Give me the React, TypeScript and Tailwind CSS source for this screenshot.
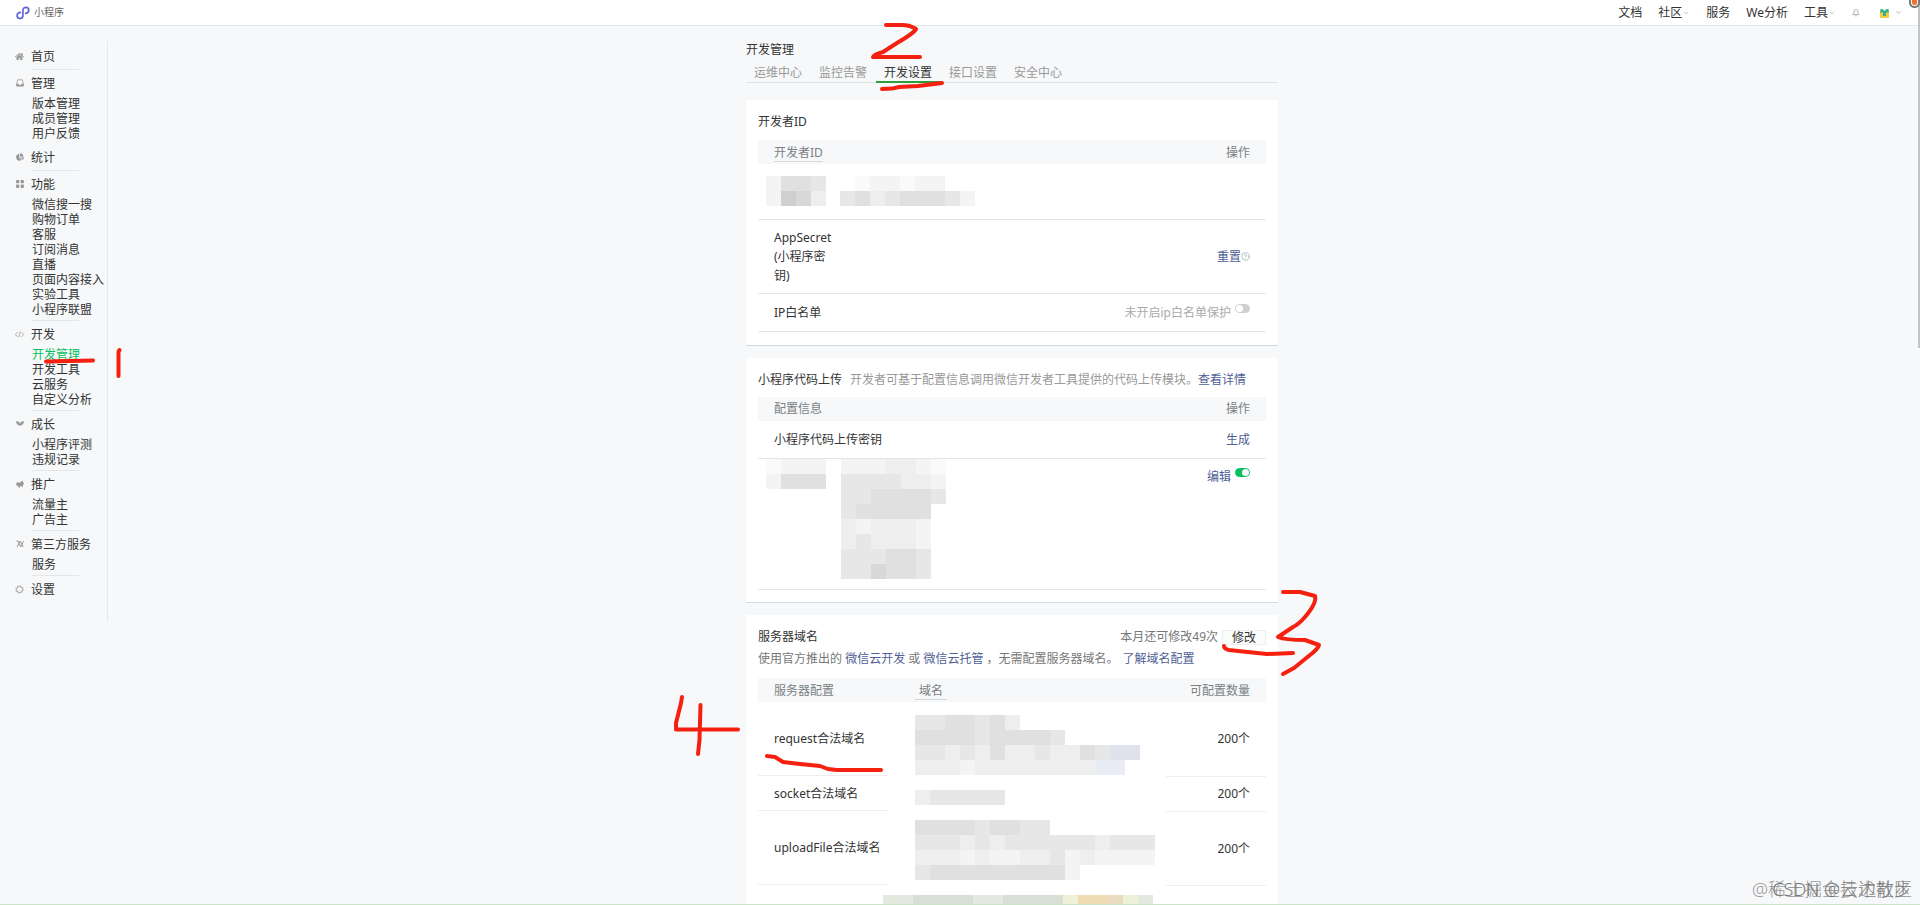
import type { ReactNode } from 'react'
import { FaHome, FaChartPie } from 'react-icons/fa'
import { ChevronDown, Bell, CircleHelp } from 'lucide-react'

interface NavSection {
  label: string
  icon: ReactNode
  items?: string[]
  divider?: boolean
}

const ManageIcon = () => (
  <svg width="8" height="8" viewBox="0 0 8 8" fill="none" stroke="currentColor">
    <path d="M0.6 5 L1.6 0.8 H6.4 L7.4 5 V7 H0.6 Z" strokeWidth="0.8" />
    <path d="M0.6 4.8 H2.4 Q2.8 6 4 6 Q5.2 6 5.6 4.8 H7.4 V7.2 H0.6 Z" fill="currentColor" stroke="none" />
  </svg>
)

const GridIcon = () => (
  <svg width="8" height="8" viewBox="0 0 8 8" fill="currentColor">
    <rect x="0" y="0" width="3.3" height="3.3" rx="0.8" />
    <rect x="4.6" y="0" width="3.3" height="3.3" rx="0.8" />
    <rect x="0" y="4.6" width="3.3" height="3.3" rx="0.8" />
    <rect x="4.6" y="4.6" width="3.3" height="3.3" rx="0.8" />
  </svg>
)

const CodeIcon = () => (
  <svg width="9" height="7" viewBox="0 0 9 7" fill="none" stroke="currentColor" strokeWidth="0.8">
    <path d="M2.4 1.2 L0.5 3.5 L2.4 5.8 M6.6 1.2 L8.5 3.5 L6.6 5.8 M5.2 0.6 L3.8 6.4" />
  </svg>
)

const GrowIcon = () => (
  <svg width="8" height="8" viewBox="0 0 8 8" fill="currentColor">
    <path d="M0 1.2 Q3.6 0.8 4 4 Q4.4 0.8 8 1.2 Q7.6 5 4 5.8 Q0.4 5 0 1.2 Z" />
  </svg>
)

const PromoteIcon = () => (
  <svg width="8" height="8" viewBox="0 0 8 8" fill="currentColor">
    <path d="M7 0.4 V7 L4.8 5.9 H4.2 V7.6 H2.2 V5.8 H0.3 V2.4 H3.8 Z" />
    <path d="M7.3 2.6 H8 V4.8 H7.3 Z" />
  </svg>
)

const ThirdPartyIcon = () => (
  <svg width="8" height="8" viewBox="0 0 8 8" fill="none" stroke="currentColor" strokeWidth="1">
    <path d="M0.5 1 H2 L4.6 7 M4.2 1 L1 7 M4.2 1 L7.2 7 M7.6 1 L4.6 7" />
  </svg>
)

const SettingIcon = () => (
  <svg width="9" height="9" viewBox="0 0 9 9" fill="none" stroke="currentColor">
    <circle cx="4.5" cy="4.5" r="3" strokeWidth="0.9" />
    <circle cx="4.5" cy="4.5" r="3.8" strokeWidth="0.9" strokeDasharray="1.2 1.78" />
  </svg>
)

const sections: NavSection[] = [
  { label: '首页', icon: <FaHome size={9} />, divider: true },
  { label: '管理', icon: <ManageIcon />, items: ['版本管理', '成员管理', '用户反馈'] },
  { label: '统计', icon: <FaChartPie size={8} />, divider: true },
  {
    label: '功能',
    icon: <GridIcon />,
    items: ['微信搜一搜', '购物订单', '客服', '订阅消息', '直播', '页面内容接入', '实验工具', '小程序联盟'],
    divider: true,
  },
  { label: '开发', icon: <CodeIcon />, items: ['开发管理', '开发工具', '云服务', '自定义分析'], divider: true },
  { label: '成长', icon: <GrowIcon />, items: ['小程序评测', '违规记录'], divider: true },
  { label: '推广', icon: <PromoteIcon />, items: ['流量主', '广告主'], divider: true },
  { label: '第三方服务', icon: <ThirdPartyIcon />, items: ['服务'], divider: true },
  { label: '设置', icon: <SettingIcon /> },
]

const tabs = ['运维中心', '监控告警', '开发设置', '接口设置', '安全中心']

// Each character is one tile, '.' leaves it empty
const shades: Record<string, string> = {
  '.': 'transparent',
  a: '#fafafa',
  b: '#f4f4f4',
  c: '#eeeeee',
  d: '#e7e7e7',
  e: '#e0e0e0',
  f: '#d8d8d8',
  g: '#cfcfcf',
  h: '#dfe2ea',
  i: '#eaecf5',
  l: '#e3e9de',
  m: '#d8dfd5',
  n: '#eef0d8',
  o: '#eedcb4',
  p: '#e9dcc0',
}

const Mosaic = ({ rows }: { rows: string[] }) => (
  <div aria-hidden="true">
    {rows.map((row, r) => (
      <div key={r} className="flex">
        {row.split('').map((tile, i) => (
          <span key={i} className="size-[15px] shrink-0" style={{ background: shades[tile] }} />
        ))}
      </div>
    ))}
  </div>
)

const Switch = ({ label, on = false }: { label: string; on?: boolean }) => (
  <label className="mb-2 inline-flex">
    <input type="checkbox" role="switch" aria-label={label} defaultChecked={on} className="peer sr-only" />
    <span className="flex h-[9px] w-[15px] rounded-full border border-[#cfcfcf] bg-[#cfcfcf] peer-checked:justify-end peer-checked:border-[#07c160] peer-checked:bg-[#07c160]">
      <span className="size-[7px] rounded-full bg-white" />
    </span>
  </label>
)

const Card = ({ children }: { children: ReactNode }) => (
  <section className="border-b border-[#d5dadc] bg-white px-3">{children}</section>
)

const Header = () => (
  <header className="flex h-[26px] shrink-0 items-center justify-between border-b border-[#e4e7e9] bg-white pr-[18px] pl-4">
    <a href="#" className="flex items-center gap-1 text-[10px] text-[#666]">
      <svg width="14" height="14" viewBox="0 0 14 14" fill="none" stroke="#6467d9" strokeWidth="1.7" strokeLinecap="round">
        <path d="M4.4 6.4 C2.2 6.8 1.1 8 1.1 9.6 C1.1 11.3 2.4 12.6 4 12.6 C5.7 12.6 6.9 11.3 6.9 9.6 V4.4 C6.9 2.6 8.2 1.4 9.9 1.4 C11.6 1.4 12.8 2.6 12.8 4.2 C12.8 5.8 11.6 7 9.6 7.4" />
      </svg>
      小程序
    </a>
    <nav className="flex items-center">
      <a href="#" className="mr-4">文档</a>
      <a href="#" className="mr-4 flex items-center">社区<ChevronDown size={8} color="#aaa" /></a>
      <a href="#" className="mr-4">服务</a>
      <a href="#" className="mr-4">We分析</a>
      <a href="#" className="mr-4 flex items-center">工具<ChevronDown size={8} color="#aaa" /></a>
      <button aria-label="通知" className="mr-5"><Bell size={8} color="#888" /></button>
      <button aria-label="账号" className="flex items-center gap-1.5">
        <svg width="9" height="10" viewBox="0 0 9 10">
          <path d="M0 3 H9 V10 H0 Z" fill="#f6c944" />
          <path d="M0.5 1 L3 1.2 L4.5 3 L6 1.2 L8.5 1 L9 4.4 H6 V8 H3 V4.4 H0 Z" fill="#35b48c" />
        </svg>
        <ChevronDown size={7} color="#888" />
      </button>
    </nav>
  </header>
)

const Sidebar = () => (
  <nav className="relative mt-[15px] w-[108px] shrink-0 self-start border-r border-[#e6e8ea] pt-0.5 pb-5">
    {sections.map(section => (
      <div key={section.label} className="flex">
        <span className="flex h-[26px] w-[31px] shrink-0 items-center justify-center pl-2 text-[#999]">{section.icon}</span>
        <div className="whitespace-nowrap">
          <a href="#" className="flex h-[26px] items-center">{section.label}</a>
          {section.items && (
            <ul className="pb-[3px] pl-px leading-[15px]">
              {section.items.map(item => (
                <li key={item}>
                  <a href="#" className={item === '开发管理' ? 'text-[#07c160]' : ''}>{item}</a>
                </li>
              ))}
            </ul>
          )}
          {section.divider && <hr className="w-12 border-[#e4e6e8]" />}
        </div>
      </div>
    ))}
    <svg className="pointer-events-none absolute top-0 left-0 overflow-visible" width="108" height="580" fill="none" stroke="#f5200f" strokeWidth="4" strokeLinecap="round" strokeLinejoin="round">
      <path d="M46 320.5 L93 319.5" />
      <path d="M119.5 309 L118.5 311 V335" />
    </svg>
  </nav>
)

const DeveloperId = () => (
  <Card>
    <h3 className="pt-3 pb-[9px]">开发者ID</h3>
    <table className="w-full table-fixed">
      <thead className="bg-[#f6f8f9] text-[#7b7f83]">
        <tr className="h-6">
          <th className="w-[100px] pl-4 text-left font-normal">
            <span className="border-b border-[#d5d9dc]">开发者ID</span>
          </th>
          <th className="pr-4 text-right font-normal">操作</th>
        </tr>
      </thead>
      <tbody>
        <tr className="h-[55px] border-b border-[#e2e4e6]">
          <td className="pl-2">
            <Mosaic rows={['beed', 'bgfc']} />
          </td>
          <td>
            <div className="-ml-[18px]"><Mosaic rows={['.abbabb', 'decdeeedb']} /></div>
          </td>
        </tr>
        <tr className="h-[74px] border-b border-[#e2e4e6]">
          <td className="pl-4">AppSecret<br />(小程序密<br />钥)</td>
          <td className="pr-4">
            <div className="flex items-center justify-end">
              <a href="#" className="text-[#4f6095]">重置</a>
              <CircleHelp size={9} color="#aaa" />
            </div>
          </td>
        </tr>
        <tr className="h-[38px] border-b border-[#e2e4e6]">
          <td className="pl-4">IP白名单</td>
          <td className="pr-4">
            <div className="flex items-center justify-end gap-1 text-[#aaa]">
              未开启ip白名单保护
              <Switch label="IP白名单保护" />
            </div>
          </td>
        </tr>
      </tbody>
    </table>
    <div className="h-[13px]" />
  </Card>
)

const CodeUpload = () => (
  <Card>
    <div className="flex pt-3 pb-2 whitespace-nowrap">
      <h3 className="mr-2">小程序代码上传</h3>
      <p className="text-[#999]">
        开发者可基于配置信息调用微信开发者工具提供的代码上传模块。<a href="#" className="text-[#4f6095]">查看详情</a>
      </p>
    </div>
    <table className="w-full">
      <thead className="bg-[#f6f8f9] text-[#7b7f83]">
        <tr className="h-6">
          <th className="pl-4 text-left font-normal">配置信息</th>
          <th className="pr-4 text-right font-normal">操作</th>
        </tr>
      </thead>
      <tbody>
        <tr className="h-[38px] border-b border-[#e2e4e6]">
          <td className="pl-4">小程序代码上传密钥</td>
          <td className="pr-4 text-right"><a href="#" className="text-[#4f6095]">生成</a></td>
        </tr>
        <tr className="h-[131px] border-b border-[#e2e4e6] align-top">
          <td className="pl-2">
            <div className="flex gap-[15px]">
              <Mosaic rows={['abbb', 'beee']} />
              <Mosaic rows={['bbbccba', 'ddddccb', 'ddeeeed', 'deeeee', 'cbcccb', 'cdcccb', 'dddeed', 'ddfeed']} />
            </div>
          </td>
          <td className="pt-2 pr-4">
            <div className="flex items-center justify-end gap-1">
              <a href="#" className="text-[#4f6095]">编辑</a>
              <Switch label="小程序代码上传" on />
            </div>
          </td>
        </tr>
      </tbody>
    </table>
    <div className="h-3" />
  </Card>
)

const domains = [
  {
    name: 'request合法域名',
    height: 'h-[74px]',
    offset: 'pt-3',
    tiles: ['ddeedec', 'eeeedeeeed', 'ddcdceccdccedhh', 'cccbccccccccii'],
  },
  { name: 'socket合法域名', height: 'h-[35px]', offset: 'pt-2', tiles: ['cddddd'] },
  {
    name: 'uploadFile合法域名',
    height: 'h-[74px]',
    offset: 'pt-1',
    tiles: ['eeeedeedd', 'dddcdcddddddcddd', 'cccbcbbccdbcbbbb', 'deeeeeeeeeb'],
  },
]

const ServerDomains = () => (
  <Card>
    <div className="flex items-center justify-between pt-3 leading-5">
      <h3>服务器域名</h3>
      <div className="flex items-center gap-1 text-[#777]">
        本月还可修改49次
        <button className="h-[15px] w-11 border border-[#eceeef] bg-[#fafbfb] text-xs leading-[13px] text-[#333]">修改</button>
      </div>
    </div>
    <p className="pt-0.5 pb-[10px] whitespace-nowrap text-[#777]">
      使用官方推出的 <a href="#" className="text-[#4f6095]">微信云开发</a> 或 <a href="#" className="text-[#4f6095]">微信云托管</a> ，无需配置服务器域名。
      <a href="#" className="ml-1 text-[#4f6095]">了解域名配置</a>
    </p>
    <table className="w-full table-fixed">
      <thead className="bg-[#f6f8f9] text-[#7b7f83]">
        <tr className="h-6">
          <th className="w-[157px] pl-4 text-left font-normal">服务器配置</th>
          <th className="text-left font-normal"><span className="border-b border-[#d5d9dc] px-1">域名</span></th>
          <th className="w-[100px] pr-4 text-right font-normal">可配置数量</th>
        </tr>
      </thead>
      <tbody>
        {domains.map(domain => (
          <tr key={domain.name} className={domain.height}>
            <td>
              <div className={`mr-[27px] flex items-center border-b border-[#eceeef] pl-4 whitespace-nowrap ${domain.height}`}>{domain.name}</div>
            </td>
            <td className={domain.offset}><Mosaic rows={domain.tiles} /></td>
            <td className="border-b border-[#eceeef] pr-4 text-right">200个</td>
          </tr>
        ))}
        <tr>
          <td />
          <td className="pt-[10px]"><div className="-ml-8"><Mosaic rows={['llmmmmllmmmmnoopnl']} /></div></td>
          <td />
        </tr>
      </tbody>
    </table>
  </Card>
)

// Hand-drawn marks, in the coordinates of the settings column
const Marks = () => (
  <svg className="pointer-events-none absolute top-0 left-0 overflow-visible" width="532" height="800" fill="none" stroke="#f5200f" strokeWidth="4" strokeLinecap="round" strokeLinejoin="round">
    <g transform="translate(-746 -26)">
      <path d="M886 25 H902 Q910 25 916 29 Q914 33 897 43 L883 52 Q875 54 873 57 H920" />
      <path d="M882 89 L892 88.6 L899 87 L918 86 L942 83" />
      <path d="M1283 592 H1300 L1315 596 Q1317 603 1305 617 Q1299 624 1293 627 L1278 637 Q1285 640 1305 640 L1319 645 Q1318 649 1310 655 L1294 668 L1283 674" />
      <path d="M1224 646 Q1224 649 1229 650 L1238 651 L1267 654 L1293 653" />
      <path d="M682 697 L681 703 L676 723 V729.5 H738" />
      <path d="M700.5 705 L699.5 740 L698 754" />
      <path d="M767 756 L775 757 L783 762 L800 764 L820 766 L828 769 L837 770 H881" />
    </g>
  </svg>
)

const App = () => (
  <div className="relative flex h-screen flex-col overflow-hidden bg-[#f6f8f9] font-['Noto_Sans','Noto_Sans_CJK_SC',sans-serif] text-xs leading-[19px] text-[#333]">
    <Header />
    <div className="flex">
      <Sidebar />
      <main className="flex flex-1 justify-center pr-1">
        <div className="relative w-[532px]">
          <h2 className="pt-[14px]">开发管理</h2>
          <div role="tablist" className="mb-[17px] flex h-6 gap-px border-b border-[#dfe2e4]">
            {tabs.map(tab => (
              <button
                key={tab}
                role="tab"
                aria-selected={tab === '开发设置'}
                className="-mb-px h-6 border-b-2 border-transparent px-2 pt-1 text-[#999] aria-selected:border-[#2f9e3a] aria-selected:text-[#333]"
              >
                {tab}
              </button>
            ))}
          </div>
          <div className="flex flex-col gap-3">
            <DeveloperId />
            <CodeUpload />
            <ServerDomains />
          </div>
          <Marks />
        </div>
      </main>
    </div>
    <div className="absolute top-0 right-0 h-[348px] w-0.5 bg-[#c4c4c4]" />
    <div className="absolute -top-3 right-0 h-5 w-[11px] rounded-full border-2 border-[#777] bg-white p-px">
      <div className="h-full rounded-full bg-[#f4702a]" />
    </div>
    <div className="absolute right-0 bottom-0 h-px w-full bg-[#cfe3cb]" />
    <div className="absolute right-2 bottom-1 text-lg leading-6 font-light whitespace-nowrap text-[#999]">@稀土掘金技术社区</div>
    <div className="absolute right-2 bottom-1 text-lg leading-6 font-light whitespace-nowrap text-[#777]">CSDN @云边散步</div>
  </div>
)

export default App
